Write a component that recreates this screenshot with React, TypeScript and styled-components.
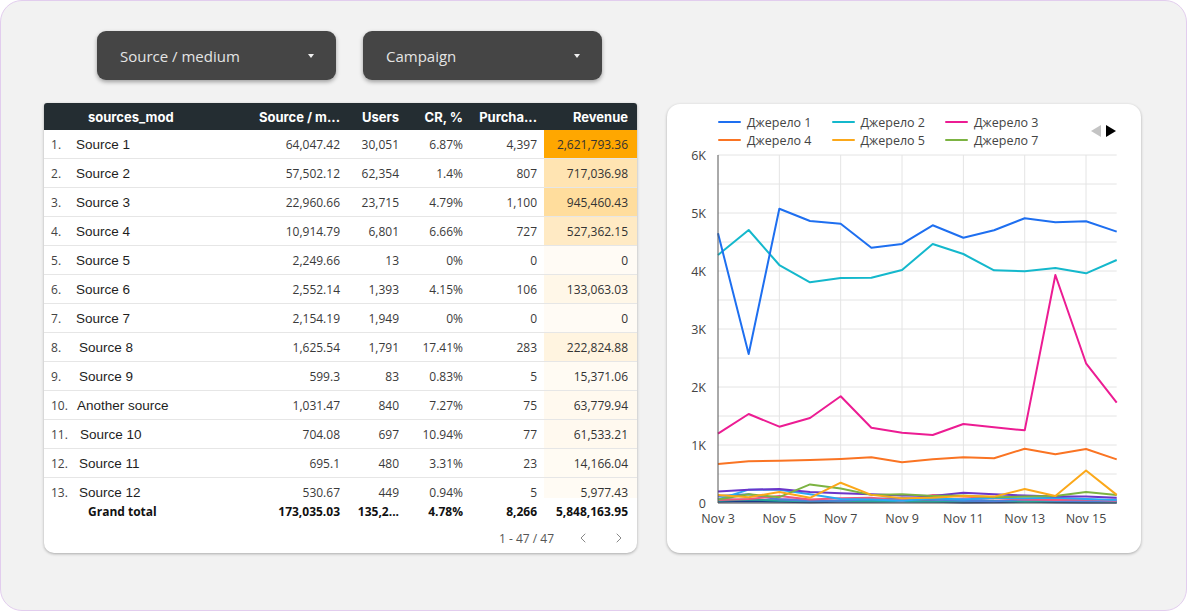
import React from 'react';
import styled, { createGlobalStyle } from 'styled-components';
import { ChevronLeft, ChevronRight } from 'lucide-react';

const GlobalStyle = createGlobalStyle`
    body {
        margin: 0;
        background: #ffffff;
        font-family: 'Open Sans', sans-serif;
    }
`;

const COLS = '26px 170px 106px 60px 64px 74px 93px';

const Frame = styled.div`
    width: 1187px;
    height: 611px;
    box-sizing: border-box;
    border: 1px solid #e2cdee;
    border-radius: 22px;
    background: #f2f2f2;
    padding: 30px 0 0 43px;
    display: flex;
    flex-direction: column;
    gap: 23px;
`;

const FilterBar = styled.div`
    display: flex;
    gap: 27px;
    margin-left: 53px;
`;

const Dropdown = styled.div`
    width: 239px;
    height: 49px;
    box-sizing: border-box;
    border-radius: 9px;
    background: #454545;
    box-shadow: 0 2px 4px rgba(0, 0, 0, 0.35);
    display: flex;
    align-items: center;
    justify-content: space-between;
    padding: 0 22px 0 23px;
    color: #e4e4e4;
    font-size: 15px;
`;

const Caret = styled.span`
    width: 0;
    height: 0;
    border-left: 3.5px solid transparent;
    border-right: 3.5px solid transparent;
    border-top: 4px solid #f0f0f0;
`;

const Content = styled.div`
    display: flex;
    gap: 30px;
    align-items: flex-start;
`;

const TableCard = styled.div`
    width: 593px;
    height: 450px;
    background: #fff;
    border-radius: 3px 3px 10px 10px;
    box-shadow: 0 1px 3px rgba(0, 0, 0, 0.3);
    display: flex;
    flex-direction: column;
    overflow: hidden;
`;

const HeaderRow = styled.div`
    display: grid;
    grid-template-columns: ${COLS};
    flex: 0 0 27px;
    background: #242d32;
    color: #fff;
    font-family: Inter, 'Open Sans', sans-serif;
    font-weight: 700;
    font-size: 13px;
`;

const Cell = styled.div<{ $left?: boolean; $pad?: number }>`
    display: flex;
    align-items: center;
    justify-content: ${(p) => (p.$left ? 'flex-start' : 'flex-end')};
    padding: ${(p) => (p.$left ? `0 0 0 ${p.$pad ?? 7}px` : `0 ${p.$pad ?? 7}px 0 0`)};
    white-space: nowrap;
    overflow: hidden;
`;

const Body = styled.div`
    flex: 0 0 368px;
    overflow: hidden;
`;

const Row = styled.div`
    display: grid;
    grid-template-columns: ${COLS};
    height: 29px;
    box-sizing: border-box;
    border-bottom: 1px solid #e6e6e6;
    font-size: 12px;
    color: #3a3a3a;
`;

const IndexCell = styled(Cell)`
    color: #444;
`;

const NameCell = styled(Cell)`
    font-family: 'Liberation Sans', Arial, sans-serif;
    font-size: 13.5px;
    color: #1e1e1e;
`;

const RevenueCell = styled(Cell)<{ $heat: number }>`
    background: ${(p) => {
        const a = 0.04 + 0.96 * p.$heat;
        const g = Math.round(255 - 88 * a);
        const b = Math.round(255 - 255 * a);
        return `rgb(255, ${g}, ${b})`;
    }};
    color: #333;
`;

const TotalRow = styled.div`
    display: grid;
    grid-template-columns: ${COLS};
    flex: 0 0 26px;
    font-size: 12px;
    font-weight: 700;
    color: #111;
`;

const Pager = styled.div`
    display: flex;
    justify-content: flex-end;
    align-items: center;
    flex: 0 0 28px;
    padding-right: 10px;
    font-size: 12px;
    color: #555;
    svg {
        color: #888;
    }
    span {
        margin-right: 21px;
    }
    svg + svg {
        margin-left: 20px;
    }
`;

const ChartCard = styled.div`
    width: 474px;
    height: 449px;
    margin-top: 1px;
    background: #fff;
    border-radius: 13px;
    box-shadow: 0 1px 3px rgba(0, 0, 0, 0.3);
    display: flex;
    flex-direction: column;
`;

const LegendBar = styled.div`
    display: flex;
    align-items: center;
    padding: 9px 25px 0 51px;
`;

const LegendItems = styled.div`
    width: 350px;
    display: flex;
    flex-wrap: wrap;
    column-gap: 20px;
`;

const LegendItem = styled.div`
    display: flex;
    align-items: center;
    gap: 6px;
    height: 18px;
    font-size: 12.5px;
    color: #444;
`;

const Swatch = styled.span<{ $color: string }>`
    width: 23px;
    height: 2.5px;
    border-radius: 1px;
    background: ${(p) => p.$color};
`;

const LegendNav = styled.div`
    margin-left: auto;
    display: flex;
    gap: 5px;
`;

type Source = {
    name: string;
    indent: number;
    sm: string;
    users: string;
    cr: string;
    purch: string;
    rev: number;
};

const sources: Source[] = [
    { name: 'Source 1', indent: 0, sm: '64,047.42', users: '30,051', cr: '6.87%', purch: '4,397', rev: 2621793.36 },
    { name: 'Source 2', indent: 0, sm: '57,502.12', users: '62,354', cr: '1.4%', purch: '807', rev: 717036.98 },
    { name: 'Source 3', indent: 0, sm: '22,960.66', users: '23,715', cr: '4.79%', purch: '1,100', rev: 945460.43 },
    { name: 'Source 4', indent: 0, sm: '10,914.79', users: '6,801', cr: '6.66%', purch: '727', rev: 527362.15 },
    { name: 'Source 5', indent: 0, sm: '2,249.66', users: '13', cr: '0%', purch: '0', rev: 0 },
    { name: 'Source 6', indent: 0, sm: '2,552.14', users: '1,393', cr: '4.15%', purch: '106', rev: 133063.03 },
    { name: 'Source 7', indent: 0, sm: '2,154.19', users: '1,949', cr: '0%', purch: '0', rev: 0 },
    { name: 'Source 8', indent: 3, sm: '1,625.54', users: '1,791', cr: '17.41%', purch: '283', rev: 222824.88 },
    { name: 'Source 9', indent: 3, sm: '599.3', users: '83', cr: '0.83%', purch: '5', rev: 15371.06 },
    { name: 'Another source', indent: 1, sm: '1,031.47', users: '840', cr: '7.27%', purch: '75', rev: 63779.94 },
    { name: 'Source 10', indent: 4, sm: '704.08', users: '697', cr: '10.94%', purch: '77', rev: 61533.21 },
    { name: 'Source 11', indent: 3, sm: '695.1', users: '480', cr: '3.31%', purch: '23', rev: 14166.04 },
    { name: 'Source 12', indent: 3, sm: '530.67', users: '449', cr: '0.94%', purch: '5', rev: 5977.43 },
];

const maxRev = Math.max(...sources.map((s) => s.rev));

type Series = { label?: string; color: string; values: number[] };

// legend series first, then the unnamed ones that crowd the floor of the chart
const series: Series[] = [
    { label: 'Джерело 1', color: '#1e6ff0', values: [4650, 2569, 5074, 4862, 4816, 4402, 4466, 4788, 4574, 4702, 4909, 4840, 4857, 4678] },
    { label: 'Джерело 2', color: '#14b8cc', values: [4276, 4707, 4103, 3805, 3879, 3884, 4017, 4466, 4293, 4012, 3995, 4052, 3960, 4190] },
    { label: 'Джерело 3', color: '#ec1c93', values: [1195, 1534, 1316, 1466, 1840, 1298, 1212, 1172, 1362, 1305, 1253, 3931, 2409, 1729] },
    { label: 'Джерело 4', color: '#fa7423', values: [672, 719, 729, 741, 759, 788, 702, 753, 788, 771, 936, 840, 931, 753] },
    { label: 'Джерело 5', color: '#fba81a', values: [140, 100, 190, 90, 350, 140, 80, 90, 120, 110, 240, 120, 560, 140] },
    { label: 'Джерело 7', color: '#7cb342', values: [60, 150, 100, 320, 250, 140, 150, 120, 130, 100, 110, 120, 190, 140] },
    { color: '#6b35c9', values: [200, 230, 240, 190, 170, 150, 130, 120, 175, 150, 130, 110, 110, 90] },
    { color: '#29a9f5', values: [60, 230, 230, 150, 70, 60, 40, 80, 60, 90, 80, 90, 70, 50] },
    { color: '#f0587f', values: [50, 70, 120, 60, 80, 90, 40, 140, 110, 80, 60, 50, 60, 40] },
    { color: '#4f7fd8', values: [120, 150, 60, 40, 40, 70, 90, 60, 40, 30, 60, 40, 30, 30] },
    { color: '#26a69a', values: [40, 60, 40, 30, 40, 30, 30, 20, 30, 40, 20, 30, 30, 20] },
    { color: '#1a3a8a', values: [20, 30, 20, 15, 20, 20, 25, 20, 10, 15, 20, 15, 10, 10] },
    { color: '#9c7bd9', values: [80, 40, 70, 50, 30, 40, 60, 50, 70, 40, 30, 60, 40, 60] },
];

const X0 = 51;
const STEP = 30.67;
const Y0 = 354;
const K = 0.058;
const xAt = (i: number) => X0 + i * STEP;
const yAt = (v: number) => Y0 - v * K;
const X_END = xAt(13);

const Chart = () => (
    <svg width={474} height={381} style={{ display: 'block' }}>
        {Array.from({ length: 13 }, (_, i) => (
            <line key={`h${i}`} x1={X0} x2={X_END} y1={yAt(i * 500)} y2={yAt(i * 500)} stroke="#e4e4e4" strokeWidth={1} />
        ))}
        {[2, 4, 6, 8, 10, 12].map((i) => (
            <line key={`v${i}`} x1={xAt(i)} x2={xAt(i)} y1={yAt(6000)} y2={Y0} stroke="#e4e4e4" strokeWidth={1} />
        ))}
        {[...series].reverse().map((s, si) => (
            <polyline
                key={si}
                points={s.values.map((v, i) => `${xAt(i)},${yAt(v)}`).join(' ')}
                fill="none"
                stroke={s.color}
                strokeWidth={2}
                strokeLinejoin="round"
            />
        ))}
        <line x1={X0} x2={X0} y1={yAt(6000)} y2={Y0} stroke="#555" strokeWidth={1} />
        <line x1={X0} x2={X_END} y1={Y0} y2={Y0} stroke="#555" strokeWidth={1} />
        {['0', '1K', '2K', '3K', '4K', '5K', '6K'].map((t, i) => (
            <text key={t} x={39} y={yAt(i * 1000)} textAnchor="end" dominantBaseline="central" fontSize={12.5} fill="#444">
                {t}
            </text>
        ))}
        {[3, 5, 7, 9, 11, 13, 15].map((d) => (
            <text key={d} x={xAt(d - 3)} y={369} textAnchor="middle" dominantBaseline="central" fontSize={12.5} fill="#444">
                Nov {d}
            </text>
        ))}
    </svg>
);

const App = () => (
    <>
        <GlobalStyle />
        <Frame>
            <FilterBar>
                <Dropdown>
                    Source / medium
                    <Caret />
                </Dropdown>
                <Dropdown>
                    Campaign
                    <Caret />
                </Dropdown>
            </FilterBar>
            <Content>
                <TableCard>
                    <HeaderRow>
                        <Cell $left />
                        <Cell $left $pad={18}>sources_mod</Cell>
                        <Cell $pad={6}>Source / m...</Cell>
                        <Cell>Users</Cell>
                        <Cell>CR, %</Cell>
                        <Cell>Purcha...</Cell>
                        <Cell $pad={9}>Revenue</Cell>
                    </HeaderRow>
                    <Body>
                        {sources.map((s, i) => (
                            <Row key={s.name}>
                                <IndexCell $left>{i + 1}.</IndexCell>
                                <NameCell $left $pad={6 + s.indent}>{s.name}</NameCell>
                                <Cell $pad={6}>{s.sm}</Cell>
                                <Cell>{s.users}</Cell>
                                <Cell>{s.cr}</Cell>
                                <Cell>{s.purch}</Cell>
                                <RevenueCell $pad={9} $heat={s.rev / maxRev}>
                                    {s.rev.toLocaleString('en-US', { maximumFractionDigits: 2 })}
                                </RevenueCell>
                            </Row>
                        ))}
                    </Body>
                    <TotalRow>
                        <Cell $left />
                        <Cell $left $pad={18}>Grand total</Cell>
                        <Cell $pad={6}>173,035.03</Cell>
                        <Cell>135,2...</Cell>
                        <Cell>4.78%</Cell>
                        <Cell>8,266</Cell>
                        <Cell $pad={9}>5,848,163.95</Cell>
                    </TotalRow>
                    <Pager>
                        <span>1 - 47 / 47</span>
                        <ChevronLeft size={16} strokeWidth={1.5} />
                        <ChevronRight size={16} strokeWidth={1.5} />
                    </Pager>
                </TableCard>
                <ChartCard>
                    <LegendBar>
                        <LegendItems>
                            {series
                                .filter((s) => s.label)
                                .map((s) => (
                                    <LegendItem key={s.label}>
                                        <Swatch $color={s.color} />
                                        {s.label}
                                    </LegendItem>
                                ))}
                        </LegendItems>
                        <LegendNav>
                            <svg width={10} height={12} viewBox="0 0 10 12">
                                <polygon points="10,0 10,12 0,6" fill="#c4c4c4" />
                            </svg>
                            <svg width={10} height={12} viewBox="0 0 10 12">
                                <polygon points="0,0 0,12 10,6" fill="#000" />
                            </svg>
                        </LegendNav>
                    </LegendBar>
                    <Chart />
                </ChartCard>
            </Content>
        </Frame>
    </>
);

export default App;
